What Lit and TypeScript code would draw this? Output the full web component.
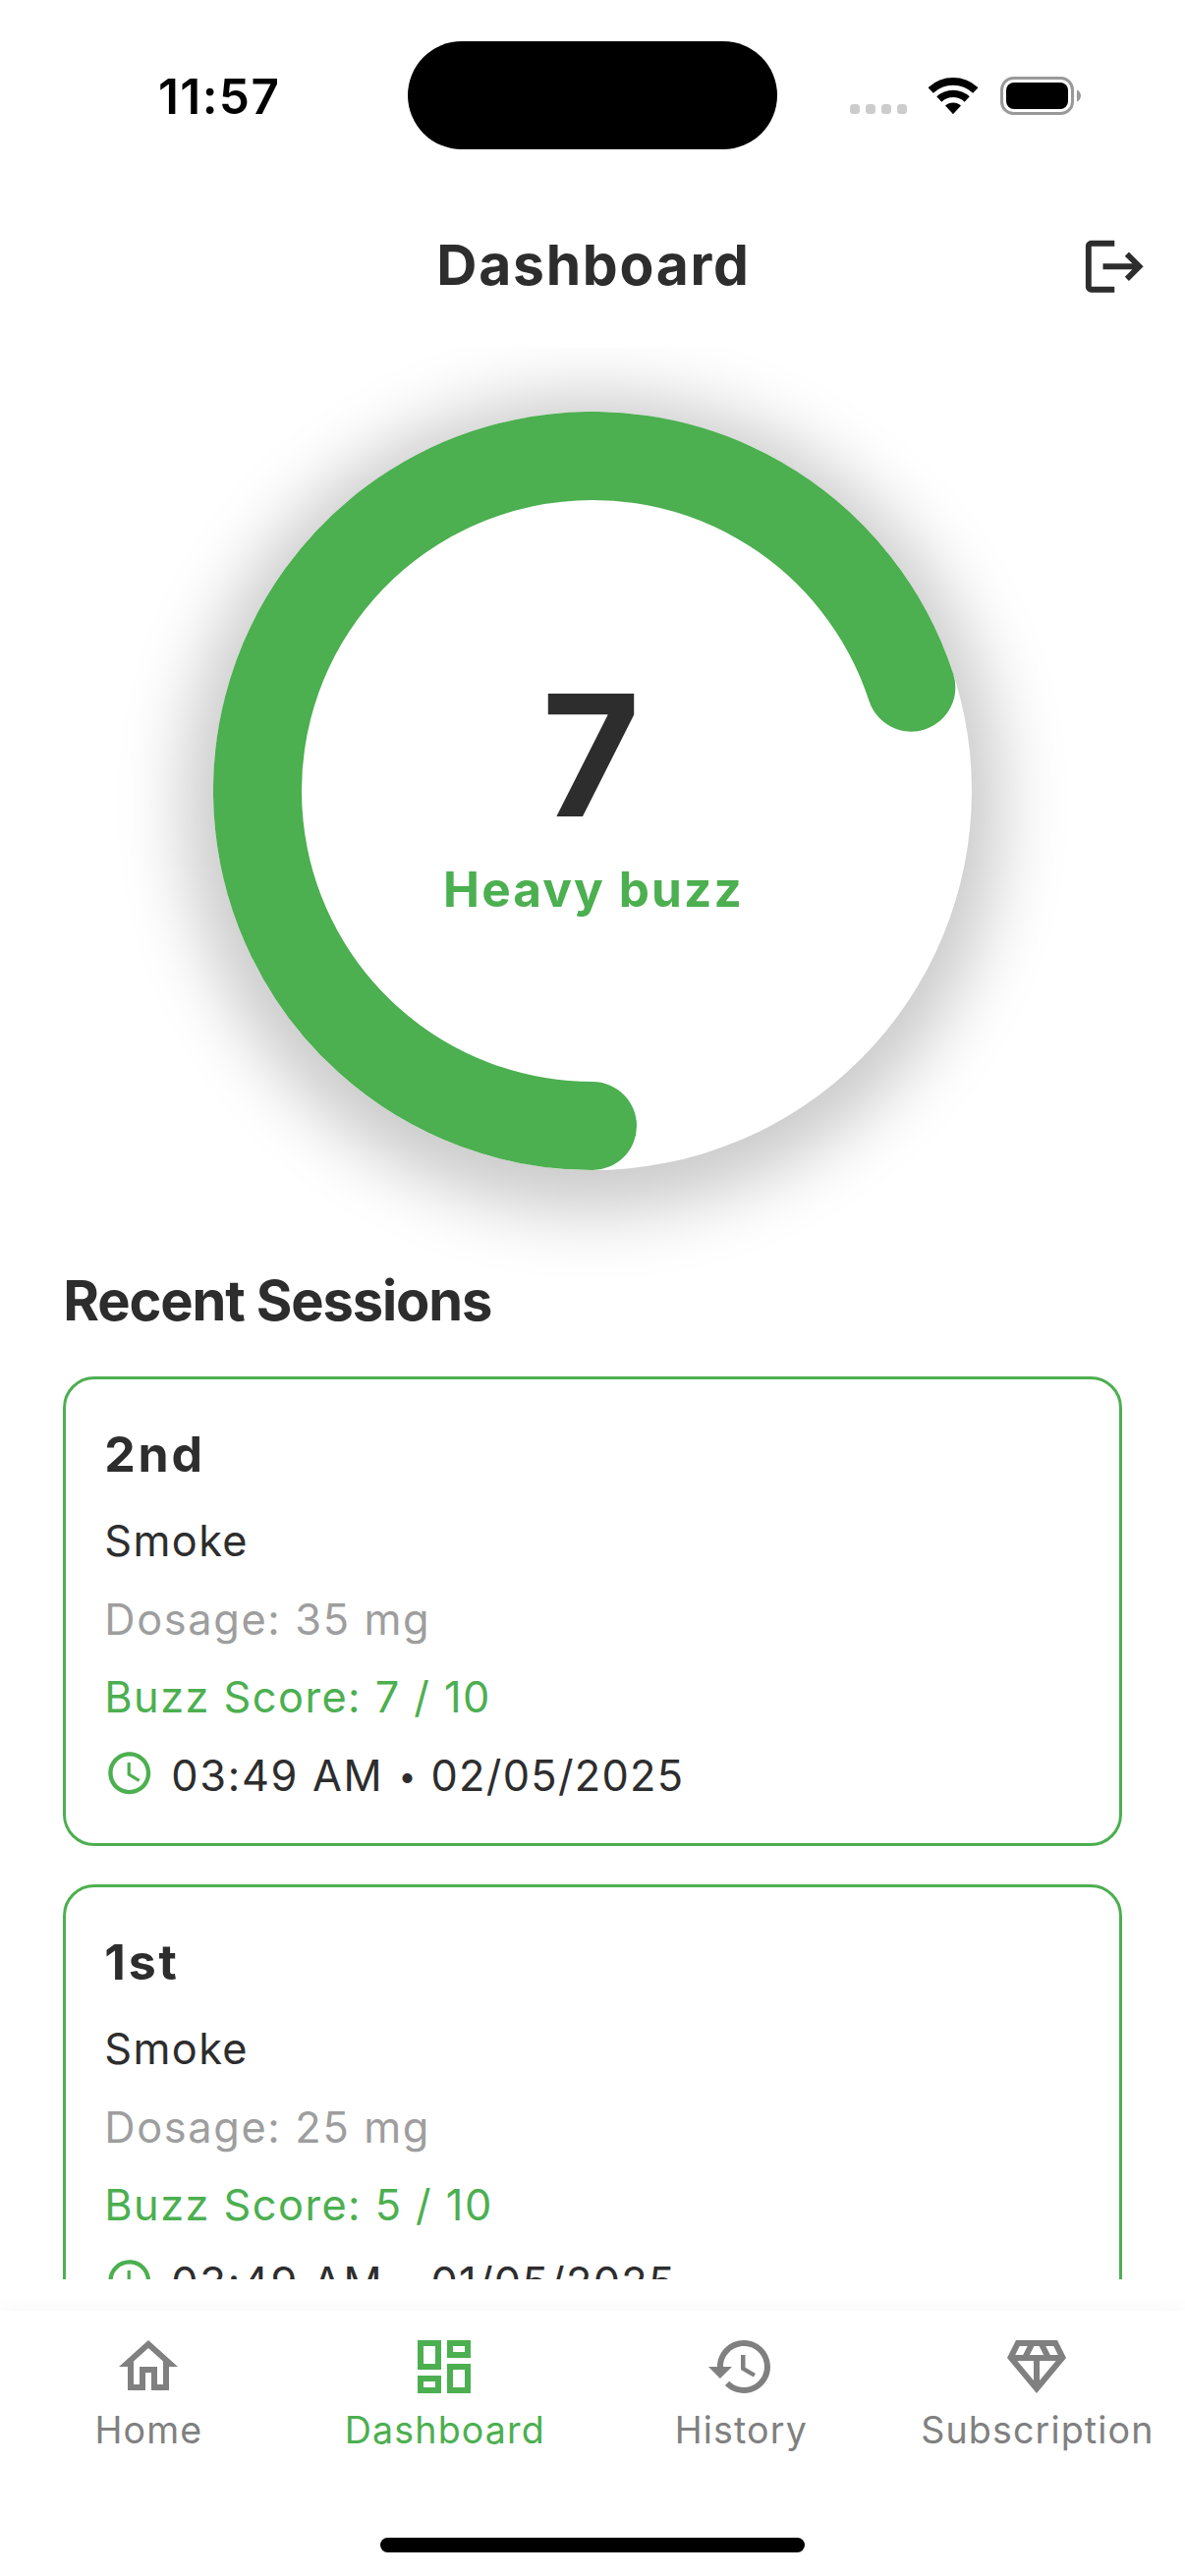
import { LitElement, html, css, svg } from "lit";
import { customElement, property } from "lit/decorators.js";
import { classMap } from "lit/directives/class-map.js";

interface Session {
  name: string;
  method: string;
  dosage: number;
  score: number;
  time: string;
  date: string;
}

const SESSIONS: Session[] = [
  { name: "2nd", method: "Smoke", dosage: 35, score: 7, time: "03:49 AM", date: "02/05/2025" },
  { name: "1st", method: "Smoke", dosage: 25, score: 5, time: "03:49 AM", date: "01/05/2025" },
];

const TABS = [
  {
    label: "Home",
    icon: "M12 5.69l5 4.5V18h-2v-6H9v6H7v-7.81l5-4.5M12 3L2 12h3v8h6v-6h2v6h6v-8h3L12 3z",
  },
  {
    label: "Dashboard",
    active: true,
    icon: "M19 5v2h-4V5h4M9 5v6H5V5h4m10 8v6h-4v-6h4M9 17v2H5v-2h4M21 3h-8v6h8V3zM11 3H3v10h8V3zm10 8h-8v10h8V11zm-10 4H3v6h8v-6z",
  },
  {
    label: "History",
    icon: "M13 3c-4.97 0-9 4.03-9 9H1l3.89 3.89.07.14L9 12H6c0-3.87 3.13-7 7-7s7 3.13 7 7-3.13 7-7 7c-1.93 0-3.68-.79-4.94-2.06l-1.42 1.42C8.27 19.99 10.51 21 13 21c4.97 0 9-4.03 9-9s-4.03-9-9-9zm-1 5v5l4.28 2.54.72-1.21-3.5-2.08V8H12z",
  },
  {
    label: "Subscription",
    icon: "M19 3H5L2 9l10 12L22 9l-3-6zM9.62 8l1.5-3h1.76l1.5 3H9.62zM11 10v6.68L5.44 10H11zm2 0h5.56L13 16.68V10zm6.26-2h-2.65l-1.5-3h2.65l1.5 3zM6.24 5h2.65l-1.5 3H4.74l1.5-3z",
  },
];

@customElement("status-bar")
class StatusBar extends LitElement {
  static styles = css`
    :host {
      display: grid;
      grid-template-columns: 415.2px 375.8px 1fr;
      height: 186px;
      box-sizing: border-box;
      padding-top: 41.6px;
      align-items: start;
    }
    .time {
      padding: 26.6px 0 0 161px;
      font-size: 49.5px;
      line-height: 60px;
      font-weight: 600;
      letter-spacing: 1.4px;
      color: #000;
    }
    .island {
      height: 110.7px;
      border-radius: 56px;
      background: #000;
    }
    .icons {
      display: flex;
      align-items: flex-end;
      padding: 36.4px 0 0 74px;
    }
    .dots {
      display: flex;
      gap: 6px;
      margin: 0 22.3px 1px 0;
    }
    .dots i {
      width: 10px;
      height: 10px;
      border-radius: 3.5px;
      background: #ccc;
    }
    .wifi {
      width: 50px;
      height: 37px;
      margin: 0 22.7px 1px 0;
    }
    .battery {
      width: 83px;
      height: 39px;
    }
    svg {
      display: block;
    }
  `;
  render() {
    return html`
      <div class="time">11:57</div>
      <div class="island"></div>
      <div class="icons">
        <div class="dots"><i></i><i></i><i></i><i></i></div>
        <svg class="wifi" viewBox="0 0 50 37">
          <g fill="none" stroke="#000">
            <path stroke-width="7.7" d="M2.2 13A33.15 33.15 0 0 1 47.8 13" />
            <path stroke-width="7.4" d="M10.8 22A20.65 20.65 0 0 1 39.2 22" />
          </g>
          <path d="M25 37.2L17 28.6A11.7 11.7 0 0 1 33 28.6Z" />
        </svg>
        <svg class="battery" viewBox="0 0 83 39">
          <rect x="1.5" y="1.5" width="72" height="36" rx="12" fill="none" stroke="#999" stroke-width="3" />
          <rect x="6" y="6" width="63" height="27" rx="8" />
          <path d="M78 13.5C83.3 15.5 83.3 23.5 78 25.5Z" fill="#999" />
        </svg>
      </div>
    `;
  }
}

@customElement("buzz-ring")
class BuzzRing extends LitElement {
  static styles = css`
    :host {
      display: grid;
      width: 772px;
      height: 772px;
      border-radius: 50%;
      background: #fff;
      box-shadow: 0 13px 68px 30px rgba(0, 0, 0, 0.208);
    }
    svg,
    .label {
      grid-area: 1 / 1;
    }
    svg {
      width: 772px;
      height: 772px;
    }
    .label {
      display: flex;
      flex-direction: column;
      align-items: center;
      padding-top: 263px;
    }
    .score {
      padding-right: 3px;
      font-size: 172px;
      line-height: 172px;
      font-weight: 700;
      color: #2d2d2d;
    }
    .text {
      margin-top: 21.7px;
      padding-left: 2px;
      font-size: 49.5px;
      line-height: 60px;
      font-weight: 700;
      letter-spacing: 2.1px;
      color: #4caf50;
    }
  `;
  @property({ type: Number }) score = 0;
  @property() text = "";

  private arc() {
    const r = 341;
    const c = 386;
    const end = ((90 + this.score * 36) * Math.PI) / 180;
    const large = this.score > 5 ? 1 : 0;
    return `M${c} ${c + r}A${r} ${r} 0 ${large} 1 ${c + r * Math.cos(end)} ${c + r * Math.sin(end)}`;
  }
  render() {
    return html`
      <svg viewBox="0 0 772 772">
        ${svg`<path d=${this.arc()} fill="none" stroke="#4caf50" stroke-width="90" stroke-linecap="round" />`}
      </svg>
      <div class="label">
        <div class="score">${this.score}</div>
        <div class="text">${this.text}</div>
      </div>
    `;
  }
}

@customElement("session-card")
class SessionCard extends LitElement {
  static styles = css`
    :host {
      display: block;
      box-sizing: border-box;
      height: 478.4px;
      flex: none;
      border: 3px solid #4caf50;
      border-radius: 32px;
      padding: 34.5px 39px 0;
      font-size: 43.3px;
      line-height: 79.4px;
      color: #2d2d2d;
      white-space: nowrap;
    }
    .name {
      font-size: 50px;
      line-height: 84px;
      font-weight: 700;
      letter-spacing: 2.8px;
      margin-bottom: 6.9px;
    }
    .method {
      letter-spacing: 1.4px;
    }
    .dosage {
      letter-spacing: 1.65px;
      color: #9e9e9e;
    }
    .score {
      letter-spacing: 1.46px;
      color: #4caf50;
    }
    .when {
      display: flex;
      align-items: center;
      letter-spacing: 1.7px;
    }
    .when svg {
      width: 51.5px;
      height: 51.5px;
      margin: -4px 16.5px 0 0;
      fill: #4caf50;
    }
    .dot {
      width: 48px;
      text-align: center;
      font-size: 32px;
      letter-spacing: 0;
    }
    .date {
      letter-spacing: 1.3px;
    }
  `;
  @property({ attribute: false }) session!: Session;
  render() {
    const s = this.session;
    return html`
      <div class="name">${s.name}</div>
      <div class="method">${s.method}</div>
      <div class="dosage">Dosage: ${s.dosage} mg</div>
      <div class="score">Buzz Score: ${s.score} / 10</div>
      <div class="when">
        <svg viewBox="0 0 24 24">
          <path
            d="M11.99 2C6.47 2 2 6.48 2 12s4.47 10 9.99 10C17.52 22 22 17.52 22 12S17.52 2 11.99 2zM12 20c-4.42 0-8-3.58-8-8s3.58-8 8-8 8 3.58 8 8-3.58 8-8 8zm.5-13H11v6l5.25 3.15.75-1.23-4.5-2.67z"
          />
        </svg>
        <span>${s.time}</span><span class="dot">•</span><span class="date">${s.date}</span>
      </div>
    `;
  }
}

@customElement("app-root")
class AppRoot extends LitElement {
  static styles = css`
    :host {
      display: flex;
      flex-direction: column;
      width: 1206px;
      height: 2622px;
      overflow: hidden;
      background: #fff;
      color: #2d2d2d;
      font-family: Inter, "Liberation Sans", sans-serif;
    }
    status-bar {
      flex: none;
    }
    header {
      flex: none;
      height: 168px;
      display: grid;
      grid-template-columns: 1fr auto 1fr;
      align-items: center;
    }
    h1 {
      grid-column: 2;
      margin: 0;
      padding-left: 2px;
      font-size: 57px;
      font-weight: 700;
      line-height: 70px;
      letter-spacing: 1.7px;
    }
    .logout {
      justify-self: end;
      width: 70.5px;
      height: 70.5px;
      margin: 3px 37px 0 0;
      fill: #2d2d2d;
    }
    main {
      flex: none;
      box-sizing: border-box;
      height: 1966px;
      overflow: hidden;
      display: flex;
      flex-direction: column;
      padding: 64.6px 64.3px 0;
    }
    buzz-ring {
      flex: none;
      align-self: center;
    }
    h2 {
      position: relative;
      margin: 98.3px 0 42px;
      font-size: 56px;
      line-height: 70px;
      font-weight: 700;
      letter-spacing: -1.13px;
    }
    .list {
      display: flex;
      flex-direction: column;
      gap: 38.6px;
    }
    nav {
      flex: 1;
      margin-top: 31.7px;
      box-shadow: 0 -3px 20px rgba(0, 0, 0, 0.03);
      display: flex;
      flex-direction: column;
      align-items: center;
      padding-top: 21.3px;
    }
    .tabs {
      display: grid;
      grid-template-columns: repeat(4, 1fr);
      width: 100%;
    }
    .tab {
      display: flex;
      flex-direction: column;
      align-items: center;
      gap: 5.6px;
      color: #808080;
      font-size: 37.6px;
      line-height: 46px;
      letter-spacing: 1.15px;
      white-space: nowrap;
    }
    .tab span {
      padding-left: 1.2px;
    }
    .tab svg {
      width: 72px;
      height: 72px;
      fill: currentColor;
    }
    .active {
      color: #4caf50;
    }
    .indicator {
      width: 432px;
      height: 15px;
      border-radius: 8px;
      background: #000;
      margin-top: 86.4px;
    }
  `;
  render() {
    return html`
      <status-bar></status-bar>
      <header>
        <h1>Dashboard</h1>
        <svg class="logout" viewBox="0 0 24 24">
          <path d="M17 7l-1.41 1.41L18.17 11H8v2h10.17l-2.58 2.58L17 17l5-5zM4 5h8V3H4c-1.1 0-2 .9-2 2v14c0 1.1.9 2 2 2h8v-2H4V5z" />
        </svg>
      </header>
      <main>
        <buzz-ring .score=${7} .text=${"Heavy buzz"}></buzz-ring>
        <h2>Recent Sessions</h2>
        <div class="list">${SESSIONS.map((s) => html`<session-card .session=${s}></session-card>`)}</div>
      </main>
      <nav>
        <div class="tabs">
          ${TABS.map(
            (t) => html`<div class=${classMap({ tab: true, active: !!t.active })}>
              <svg viewBox="0 0 24 24"><path d=${t.icon} /></svg>
              <span>${t.label}</span>
            </div>`
          )}
        </div>
        <div class="indicator"></div>
      </nav>
    `;
  }
}
